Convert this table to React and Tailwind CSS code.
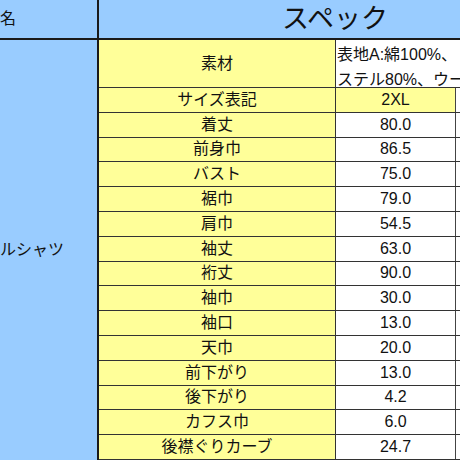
import React from "react";

const rows = [
  ["着丈", "80.0"],
  ["前身巾", "86.5"],
  ["バスト", "75.0"],
  ["裾巾", "79.0"],
  ["肩巾", "54.5"],
  ["袖丈", "63.0"],
  ["裄丈", "90.0"],
  ["袖巾", "30.0"],
  ["袖口", "13.0"],
  ["天巾", "20.0"],
  ["前下がり", "13.0"],
  ["後下がり", "4.2"],
  ["カフス巾", "6.0"],
  ["後襟ぐりカーブ", "24.7"],
];

const font = { fontFamily: '"Liberation Sans", "Noto Sans CJK JP", sans-serif' };

export default function App() {
  return (
    <div
      className="w-[460px] h-[460px] overflow-hidden bg-white text-[#111] flex flex-col"
      style={font}
    >
      {/* header */}
      <div className="flex h-[40px] shrink-0 border-b-2 border-[#1a1a1a] bg-[#99ccff]">
        <div className="w-[99px] shrink-0 border-r-2 border-[#1a1a1a] flex items-center text-[16px] leading-none">
          名
        </div>
        <div className="flex-1 flex items-center pl-[183px] text-[27px] leading-none whitespace-nowrap">
          スペック
        </div>
      </div>
      {/* body */}
      <div className="flex flex-1 min-h-0">
        <div className="w-[99px] shrink-0 border-r-2 border-[#1a1a1a] bg-[#99ccff] flex items-center text-[16px] leading-none whitespace-nowrap">
          ルシャツ
        </div>
        <div className="flex-1 flex flex-col min-w-0">
          {/* 素材 */}
          <div className="flex h-[48px] shrink-0 border-b border-[#333]">
            <div className="w-[237px] shrink-0 bg-[#ffff99] border-r border-[#333] flex items-center justify-center text-[16px] leading-none">
              素材
            </div>
            <div className="flex-1 bg-white flex flex-col pl-[1px] pt-[2px] text-[16px] leading-[25px] whitespace-nowrap">
              <div>表地A:綿100%、</div>
              <div>ステル80%、ウー</div>
            </div>
          </div>
          {/* size */}
          <div className="flex h-[24.8px] shrink-0 border-b border-[#333]">
            <div className="w-[237px] shrink-0 bg-[#ffff99] border-r border-[#333] flex items-center justify-center text-[16px] leading-none">
              サイズ表記
            </div>
            <div className="w-[120px] shrink-0 bg-[#ffff99] border-r border-[#444] flex items-center justify-center text-[16px] leading-none">
              2XL
            </div>
            <div className="flex-1 bg-white"></div>
          </div>
          {rows.map(([label, value]) => (
            <div
              key={label}
              className="flex h-[24.8px] shrink-0 border-b border-[#333]"
            >
              <div className="w-[237px] shrink-0 bg-[#ffff99] border-r border-[#333] flex items-center justify-center text-[16px] leading-none">
                {label}
              </div>
              <div className="w-[120px] shrink-0 bg-white border-r border-[#444] flex items-center justify-center text-[16px] leading-none">
                {value}
              </div>
              <div className="flex-1 bg-white"></div>
            </div>
          ))}
        </div>
      </div>
    </div>
  );
}
